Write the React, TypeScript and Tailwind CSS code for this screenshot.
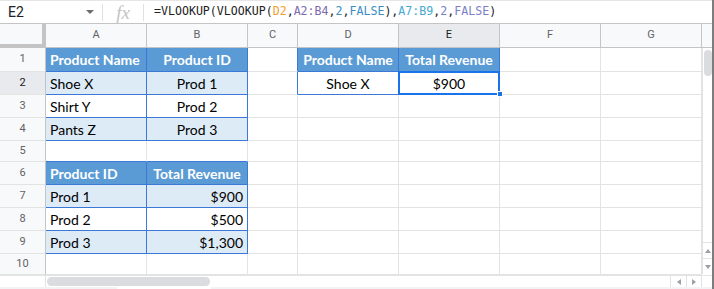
import React from "react";

type Cell = {
  t?: string;
  k?: "h" | "l" | "w";
  a?: "l" | "c" | "r";
  br?: boolean;
  bb?: boolean;
};

const widths = ["w-[101px]", "w-[101px]", "w-[50px]", "w-[101px]", "w-[101px]", "w-[101px]", "w-[101px]"];
const letters = ["A", "B", "C", "D", "E", "F", "G"];

const rows: { n: number; h: string; cells: Cell[] }[] = [
  {
    n: 1,
    h: "h-[24px]",
    cells: [
      { t: "Product Name", k: "h", a: "l", br: true, bb: true },
      { t: "Product ID", k: "h", a: "c", br: true, bb: true },
      { br: true },
      { t: "Product Name", k: "h", a: "c", br: true, bb: true },
      { t: "Total Revenue", k: "h", a: "c", br: true, bb: true },
      {},
      {},
    ],
  },
  {
    n: 2,
    h: "h-[23px]",
    cells: [
      { t: "Shoe X", k: "l", a: "l", br: true, bb: true },
      { t: "Prod 1", k: "l", a: "c", br: true, bb: true },
      { br: true },
      { t: "Shoe X", k: "w", a: "c", br: true, bb: true },
      { t: "$900", k: "w", a: "c", br: true, bb: true },
      {},
      {},
    ],
  },
  {
    n: 3,
    h: "h-[23px]",
    cells: [
      { t: "Shirt Y", k: "w", a: "l", br: true, bb: true },
      { t: "Prod 2", k: "w", a: "c", br: true, bb: true },
      {},
      {},
      {},
      {},
      {},
    ],
  },
  {
    n: 4,
    h: "h-[23px]",
    cells: [
      { t: "Pants Z", k: "l", a: "l", br: true, bb: true },
      { t: "Prod 3", k: "l", a: "c", br: true, bb: true },
      {},
      {},
      {},
      {},
      {},
    ],
  },
  { n: 5, h: "h-[21px]", cells: [{ bb: true }, { bb: true }, {}, {}, {}, {}, {}] },
  {
    n: 6,
    h: "h-[23px]",
    cells: [
      { t: "Product ID", k: "h", a: "l", br: true, bb: true },
      { t: "Total Revenue", k: "h", a: "c", br: true, bb: true },
      {},
      {},
      {},
      {},
      {},
    ],
  },
  {
    n: 7,
    h: "h-[23px]",
    cells: [
      { t: "Prod 1", k: "l", a: "l", br: true, bb: true },
      { t: "$900", k: "l", a: "r", br: true, bb: true },
      {},
      {},
      {},
      {},
      {},
    ],
  },
  {
    n: 8,
    h: "h-[23px]",
    cells: [
      { t: "Prod 2", k: "w", a: "l", br: true, bb: true },
      { t: "$500", k: "w", a: "r", br: true, bb: true },
      {},
      {},
      {},
      {},
      {},
    ],
  },
  {
    n: 9,
    h: "h-[23px]",
    cells: [
      { t: "Prod 3", k: "l", a: "l", br: true, bb: true },
      { t: "$1,300", k: "l", a: "r", br: true, bb: true },
      {},
      {},
      {},
      {},
      {},
    ],
  },
  { n: 10, h: "h-[21px]", cells: [{}, {}, {}, {}, {}, {}, {}] },
];

function SheetCell({ c, w }: { c: Cell; w: string }) {
  const bg = c.k === "h" ? "bg-[#5b9bd5] text-white font-bold" : c.k === "l" ? "bg-[#ddebf7] text-black" : "bg-white text-black";
  const align = c.a === "c" ? "justify-center" : c.a === "r" ? "justify-end pr-[4px]" : "justify-start pl-[4px]";
  return (
    <div
      className={`${w} shrink-0 flex items-center border-r border-b text-[14px] ${bg} ${align} ${
        c.br ? "border-r-[#3c78d8]" : "border-r-[#e2e3e3]"
      } ${c.bb ? "border-b-[#3c78d8]" : "border-b-[#e2e3e3]"}`}
    >
      {c.t}
    </div>
  );
}

function FormulaBar() {
  return (
    <div className="h-[24px] flex items-center border-t border-t-[#e6e6e6] border-b border-b-[#c4c4c4] bg-white">
      <div className="w-[103px] shrink-0 flex items-center pl-[8px] pr-[8px] border-r border-[#e0e0e0] h-[17px]">
        <span className="text-[14px] text-[#202124] font-[Roboto]">E2</span>
        <span className="ml-auto w-0 h-0 border-l-[4px] border-r-[4px] border-t-[4px] border-l-transparent border-r-transparent border-t-[#6b6b6b]" />
      </div>
      <div className="w-[41px] shrink-0 flex items-center justify-center border-r border-[#e0e0e0] h-[17px]">
        <span className="font-['Liberation_Serif'] italic text-[19px] leading-none text-[#c4c4c4]">fx</span>
      </div>
      <div className="pl-[10px] font-['DejaVu_Sans_Mono'] text-[11.6px] text-[#222] whitespace-pre">
        <span>=VLOOKUP(VLOOKUP(</span>
        <span className="text-[#f0a030]">D2</span>
        <span>,</span>
        <span className="text-[#7d6bb0]">A2:B4</span>
        <span>,</span>
        <span className="text-[#3a8ec4]">2</span>
        <span>,</span>
        <span className="text-[#3a8ec4]">FALSE</span>
        <span>),</span>
        <span className="text-[#45a9d0]">A7:B9</span>
        <span>,</span>
        <span className="text-[#7b7fc8]">2</span>
        <span>,</span>
        <span className="text-[#7b7fc8]">FALSE</span>
        <span>)</span>
      </div>
    </div>
  );
}

export default function App() {
  return (
    <div className="w-[714px] h-[289px] bg-white overflow-hidden relative font-[Lato] border-r-2 border-r-[#7d7d7d]">
      <FormulaBar />
      <div className="flex">
        <div className="w-[702px] shrink-0">
          {/* column headers */}
          <div className="flex h-[24px] font-[Roboto] text-[11px] text-[#5f6368]">
            <div className="w-[46px] shrink-0 bg-[#f8f9fa] border-r-4 border-b-4 border-[#c4c4c4]" />
            {letters.map((l, i) => (
              <div
                key={l}
                className={`${widths[i]} shrink-0 flex items-center justify-center border-r border-b border-[#c4c4c4] ${
                  l === "E" ? "bg-[#e8eaed] text-[#202124]" : "bg-[#f8f9fa]"
                }`}
              >
                {l}
              </div>
            ))}
          </div>
          {rows.map((r) => (
            <div key={r.n} className={`flex ${r.h}`}>
              <div
                className={`w-[46px] shrink-0 flex items-center justify-center border-r border-r-[#c4c4c4] border-b border-b-[#e2e3e3] font-[Roboto] text-[11px] ${
                  r.n === 2 ? "bg-[#e8eaed] text-[#202124]" : "bg-[#f8f9fa] text-[#5f6368]"
                }`}
              >
                {r.n}
              </div>
              {r.cells.map((c, i) => (
                <SheetCell key={i} c={c} w={widths[i]} />
              ))}
            </div>
          ))}
        </div>
        {/* vertical scrollbar */}
        <div className="flex-1 flex flex-col">
          <div className="h-[24px] bg-[#f8f9fa] border-b border-[#c4c4c4]" />
          <div className="h-[226px] flex flex-col border-l border-[#e2e3e3]">
            <div className="mt-[2px] mx-auto w-[8px] h-[26px] rounded-full bg-[#dadce0]" />
            <div className="mt-auto h-[16px] border-t border-[#e2e3e3] flex items-center justify-center">
              <span className="w-0 h-0 border-l-[3px] border-r-[3px] border-b-[4px] border-l-transparent border-r-transparent border-b-[#9aa0a6]" />
            </div>
            <div className="h-[16px] border-t border-[#e2e3e3] flex items-center justify-center">
              <span className="w-0 h-0 border-l-[3px] border-r-[3px] border-t-[4px] border-l-transparent border-r-transparent border-t-[#9aa0a6]" />
            </div>
          </div>
        </div>
      </div>
      {/* horizontal scrollbar */}
      <div className="flex h-[12px] border-t border-[#e2e3e3]">
        <div className="w-[46px] shrink-0 border-r border-[#e2e3e3]" />
        <div className="flex-1 flex items-center">
          <div className="ml-[1px] w-[163px] h-[9px] rounded-full bg-[#dadce0]" />
          <div className="ml-auto w-[16px] h-full border-l border-[#e2e3e3] flex items-center justify-center">
            <span className="w-0 h-0 border-t-[3px] border-b-[3px] border-r-[4px] border-t-transparent border-b-transparent border-r-[#9aa0a6]" />
          </div>
          <div className="w-[16px] h-full border-l border-r border-[#e2e3e3] flex items-center justify-center">
            <span className="w-0 h-0 border-t-[3px] border-b-[3px] border-l-[4px] border-t-transparent border-b-transparent border-l-[#9aa0a6]" />
          </div>
          <div className="w-[10px]" />
        </div>
      </div>
      <div className="flex h-[3px] bg-[#f1f3f4]">
        <div className="ml-[117px] w-[94px] bg-white" />
      </div>
      {/* active cell E2 */}
      <div className="absolute left-[398px] top-[71px] w-[102px] h-[24px] border-2 border-[#1a73e8]" />
      <div className="absolute left-[497px] top-[91px] w-[6px] h-[6px] bg-[#1a73e8] border border-white" />
    </div>
  );
}
